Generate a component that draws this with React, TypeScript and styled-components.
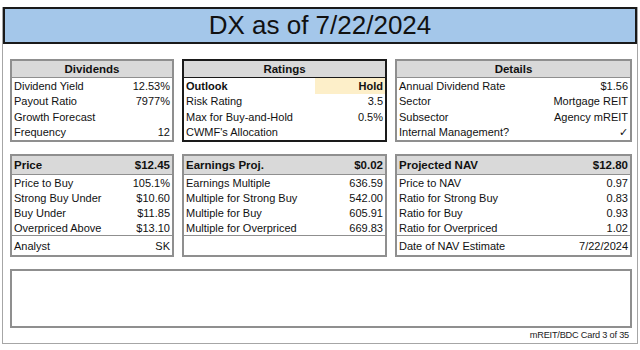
import * as React from "react";
import styled, { createGlobalStyle } from "styled-components";

const GlobalStyle = createGlobalStyle`
  html, body {
    margin: 0;
    padding: 0;
    background: #ffffff;
  }
  body {
    font-family: "Liberation Sans", Arial, sans-serif;
    color: #111111;
  }
`;

const Card = styled.div`
  box-sizing: border-box;
  width: 636px;
  height: 337px;
  margin: 7px 0 0 2px;
  border: 1px solid #a6a6a6;
  border-top: none;
  display: flex;
  flex-direction: column;
`;

const Title = styled.h1`
  box-sizing: border-box;
  margin: 0;
  height: 37px;
  border: 2px solid #1a1a1a;
  background: #a4c7ea;
  font-size: 26px;
  font-weight: 400;
  line-height: 33px;
  text-align: center;
`;

const Body = styled.div`
  padding: 15px 5px 0 7px;
  display: grid;
  grid-template-columns: 164px 205px 237px;
  grid-template-rows: 83px 103px 59px;
  column-gap: 8px;
  row-gap: 12px;
`;

const Panel = styled.section<{ $strong?: boolean }>`
  box-sizing: border-box;
  border: 2px solid ${(p) => (p.$strong ? "#1a1a1a" : "#8f8f8f")};
  display: flex;
  flex-direction: column;
  font-size: 11px;
  overflow: hidden;
`;

const Head = styled.div<{ $strong?: boolean; $tall?: boolean }>`
  display: flex;
  align-items: center;
  justify-content: center;
  height: ${(p) => (p.$tall ? 18 : 16)}px;
  padding: 0 2px;
  background: #d9d9d9;
  border-bottom: 1px solid ${(p) => (p.$strong ? "#1a1a1a" : "#8f8f8f")};
  font-weight: 700;
  font-size: 11.5px;
  flex-shrink: 0;
`;

const HeadSplit = styled(Head)`
  justify-content: space-between;
`;

const Row = styled.div<{ $h?: number; $rule?: boolean }>`
  display: flex;
  align-items: center;
  height: ${(p) => p.$h ?? 15.5}px;
  border-top: ${(p) => (p.$rule ? "1px solid #8f8f8f" : "none")};
  flex-shrink: 0;
`;

const Label = styled.span<{ $bold?: boolean }>`
  flex: 1;
  padding-left: 2px;
  font-weight: ${(p) => (p.$bold ? 700 : 400)};
  white-space: nowrap;
`;

const Value = styled.span<{ $bold?: boolean; $fill?: string; $w?: number }>`
  align-self: stretch;
  display: flex;
  align-items: center;
  justify-content: flex-end;
  width: ${(p) => (p.$w ? `${p.$w}px` : "auto")};
  padding-right: 2px;
  background: ${(p) => p.$fill ?? "transparent"};
  font-weight: ${(p) => (p.$bold ? 700 : 400)};
  white-space: nowrap;
`;

const Notes = styled.div`
  grid-column: 1 / -1;
  box-sizing: border-box;
  border: 2px solid #8f8f8f;
`;

const Footer = styled.div`
  padding: 2px 8px 0 0;
  text-align: right;
  font-size: 9.2px;
  letter-spacing: -0.2px;
  color: #222222;
`;

type Line = { label: string; value?: string };

const SimplePanel: React.FC<{ title: string; lines: Line[] }> = ({ title, lines }) => (
  <Panel>
    <Head>{title}</Head>
    {lines.map((l) => (
      <Row key={l.label}>
        <Label>{l.label}</Label>
        <Value>{l.value}</Value>
      </Row>
    ))}
  </Panel>
);

const ValuePanel: React.FC<{ title: string; amount: string; lines: Line[]; last: Line }> = ({
  title,
  amount,
  lines,
  last,
}) => (
  <Panel>
    <HeadSplit $tall>
      <span>{title}</span>
      <span>{amount}</span>
    </HeadSplit>
    {lines.map((l) => (
      <Row key={l.label} $h={15}>
        <Label>{l.label}</Label>
        <Value>{l.value}</Value>
      </Row>
    ))}
    <Row $h={19} $rule>
      <Label>{last.label}</Label>
      <Value>{last.value}</Value>
    </Row>
  </Panel>
);

export default function App() {
  return (
    <>
      <GlobalStyle />
      <Card>
        <Title>DX as of 7/22/2024</Title>
        <Body>
          <SimplePanel
            title="Dividends"
            lines={[
              { label: "Dividend Yield", value: "12.53%" },
              { label: "Payout Ratio", value: "7977%" },
              { label: "Growth Forecast" },
              { label: "Frequency", value: "12" },
            ]}
          />
          <Panel $strong>
            <Head $strong>Ratings</Head>
            <Row>
              <Label $bold>Outlook</Label>
              <Value $bold $fill="#fdefc9" $w={68}>
                Hold
              </Value>
            </Row>
            <Row>
              <Label>Risk Rating</Label>
              <Value>3.5</Value>
            </Row>
            <Row>
              <Label>Max for Buy-and-Hold</Label>
              <Value>0.5%</Value>
            </Row>
            <Row>
              <Label>CWMF's Allocation</Label>
              <Value />
            </Row>
          </Panel>
          <SimplePanel
            title="Details"
            lines={[
              { label: "Annual Dividend Rate", value: "$1.56" },
              { label: "Sector", value: "Mortgage REIT" },
              { label: "Subsector", value: "Agency mREIT" },
              { label: "Internal Management?", value: "✓" },
            ]}
          />
          <ValuePanel
            title="Price"
            amount="$12.45"
            lines={[
              { label: "Price to Buy", value: "105.1%" },
              { label: "Strong Buy Under", value: "$10.60" },
              { label: "Buy Under", value: "$11.85" },
              { label: "Overpriced Above", value: "$13.10" },
            ]}
            last={{ label: "Analyst", value: "SK" }}
          />
          <ValuePanel
            title="Earnings Proj."
            amount="$0.02"
            lines={[
              { label: "Earnings Multiple", value: "636.59" },
              { label: "Multiple for Strong Buy", value: "542.00" },
              { label: "Multiple for Buy", value: "605.91" },
              { label: "Multiple for Overpriced", value: "669.83" },
            ]}
            last={{ label: "" }}
          />
          <ValuePanel
            title="Projected NAV"
            amount="$12.80"
            lines={[
              { label: "Price to NAV", value: "0.97" },
              { label: "Ratio for Strong Buy", value: "0.83" },
              { label: "Ratio for Buy", value: "0.93" },
              { label: "Ratio for Overpriced", value: "1.02" },
            ]}
            last={{ label: "Date of NAV Estimate", value: "7/22/2024" }}
          />
          <Notes />
        </Body>
        <Footer>mREIT/BDC Card 3 of 35</Footer>
      </Card>
    </>
  );
}
